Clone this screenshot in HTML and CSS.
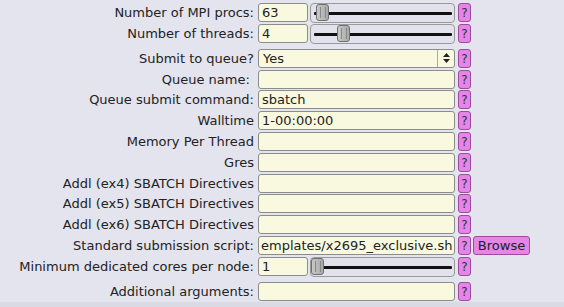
FILE: index.html
```html
<!DOCTYPE html>
<html lang="en">
<head>
    <meta charset="UTF-8">
    <title>Job Submission Options</title>
    <link rel="stylesheet" href="styles.css">
</head>
<body>
    <div class="form">
        <div class="row">
            <label class="lbl">Number of MPI procs:</label>
            <div class="field split">
                <div class="box short">63</div>
                <div class="slider"><div class="track"></div><div class="thumb" style="left: 5px"></div></div>
            </div>
            <div class="help">?</div>
        </div>

        <div class="row">
            <label class="lbl">Number of threads:</label>
            <div class="field split">
                <div class="box short">4</div>
                <div class="slider"><div class="track"></div><div class="thumb" style="left: 26px"></div></div>
            </div>
            <div class="help">?</div>
        </div>

        <div class="row spaced">
            <label class="lbl">Submit to queue?</label>
            <div class="field box select">
                <span>Yes</span>
                <span class="arrows">
                    <svg width="9" height="12" viewBox="0 0 9 12"><path d="M4.5 1 L8 5 H1 Z M4.5 11 L8 7 H1 Z" fill="#222"/></svg>
                </span>
            </div>
            <div class="help">?</div>
        </div>

        <div class="row">
            <label class="lbl">Queue name:&nbsp;</label>
            <div class="field box"></div>
            <div class="help">?</div>
        </div>

        <div class="row">
            <label class="lbl">Queue submit command:</label>
            <div class="field box">sbatch</div>
            <div class="help">?</div>
        </div>

        <div class="row">
            <label class="lbl">Walltime</label>
            <div class="field box">1-00:00:00</div>
            <div class="help">?</div>
        </div>

        <div class="row">
            <label class="lbl">Memory Per Thread</label>
            <div class="field box"></div>
            <div class="help">?</div>
        </div>

        <div class="row">
            <label class="lbl">Gres</label>
            <div class="field box"></div>
            <div class="help">?</div>
        </div>

        <div class="row">
            <label class="lbl">Addl (ex4) SBATCH Directives</label>
            <div class="field box"></div>
            <div class="help">?</div>
        </div>

        <div class="row">
            <label class="lbl">Addl (ex5) SBATCH Directives</label>
            <div class="field box"></div>
            <div class="help">?</div>
        </div>

        <div class="row">
            <label class="lbl">Addl (ex6) SBATCH Directives</label>
            <div class="field box"></div>
            <div class="help">?</div>
        </div>

        <div class="row">
            <label class="lbl">Standard submission script:</label>
            <div class="field box scrolled">emplates/x2695_exclusive.sh</div>
            <div class="help">?</div>
            <button class="browse">Browse</button>
        </div>

        <div class="row">
            <label class="lbl">Minimum dedicated cores per node:</label>
            <div class="field split">
                <div class="box short">1</div>
                <div class="slider"><div class="track"></div><div class="thumb" style="left: 0px"></div></div>
            </div>
            <div class="help">?</div>
        </div>

        <div class="row spaced">
            <label class="lbl">Additional arguments:</label>
            <div class="field box"></div>
            <div class="help">?</div>
        </div>
    </div>
    <div class="footer"></div>
</body>
</html>
```

FILE: styles.css
```css
body {
    margin: 0;
    background-color: #e4e4ee;
    font-family: "DejaVu Sans", sans-serif;
    font-size: 13px;
    color: #222;
    height: 307px;
    display: flex;
    flex-direction: column;
}
.form {
    display: flex;
    flex-direction: column;
    gap: 1.8px;
    padding-top: 3px;
    flex: 1;
}
.row {
    display: flex;
    gap: 4px;
    height: 19px;
}
.spaced {
    margin-top: 4.3px;
}
.lbl {
    width: 254px;
    flex: none;
    text-align: right;
    line-height: 19px;
    white-space: pre;
}
.field {
    width: 197px;
    flex: none;
}
.box {
    background-color: #f9f9df;
    border: 1px solid #8c8c8c;
    border-radius: 3px;
    box-sizing: border-box;
    height: 19px;
    line-height: 17px;
    padding: 0 3px;
    overflow: hidden;
    white-space: nowrap;
}
.split {
    display: flex;
    gap: 2px;
}
.short {
    width: 50px;
    flex: none;
}
.slider {
    flex: 1;
    position: relative;
    border: 1px solid #999;
    border-radius: 4px;
    box-sizing: border-box;
    height: 20px;
    background-color: #e2e2ec;
}
.track {
    position: absolute;
    left: 3px;
    right: 2px;
    top: 8px;
    height: 3px;
    background-color: #111;
    border-radius: 1px;
}
.thumb {
    position: absolute;
    top: 0;
    width: 13px;
    height: 17px;
    box-sizing: border-box;
    border: 1px solid #707070;
    border-radius: 3px;
    background: linear-gradient(to right, #c8c8c8, #a8a8a8);
}
.thumb::after {
    content: "";
    position: absolute;
    left: 3px;
    top: 2px;
    width: 4px;
    height: 11px;
    border-left: 1px solid #888;
    border-right: 1px solid #888;
}
.select {
    display: flex;
    justify-content: space-between;
    padding-left: 4px;
    padding-right: 0;
}
.arrows {
    width: 16px;
    border-left: 1px solid #aaa;
    display: flex;
    align-items: center;
    justify-content: center;
}
.scrolled {
    padding: 0 2px;
    text-align: right;
}
.help {
    width: 13px;
    flex: none;
    margin-left: -1px;
    background-color: #e585e5;
    border: 1px solid #9c4a9c;
    border-radius: 3px;
    box-sizing: border-box;
    height: 19px;
    font-size: 12px;
    line-height: 18px;
    text-align: center;
    color: #333;
}
.browse {
    margin-left: -2px;
    height: 19px;
    width: 57px;
    padding: 0;
    background-color: #e585e5;
    border: 1px solid #9c4a9c;
    border-radius: 3px;
    font-family: "DejaVu Sans", sans-serif;
    font-size: 13px;
    color: #222;
}
.footer {
    height: 5px;
    background-color: #dadae4;
}
```
